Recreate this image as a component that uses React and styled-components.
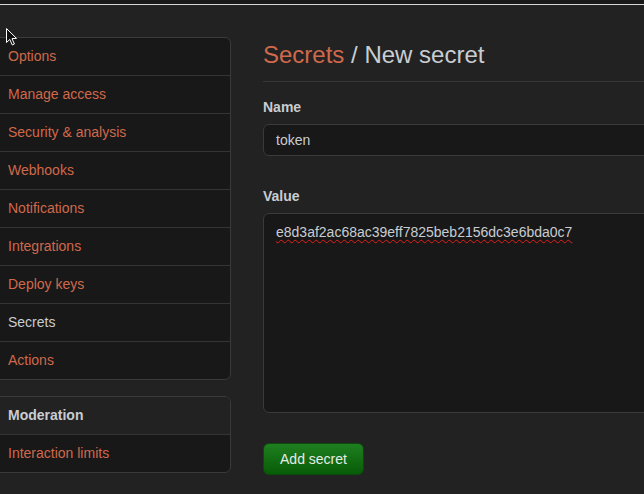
import React from 'react'
import styled, {createGlobalStyle} from 'styled-components'

const orange = '#d0694b'
const light = '#c9cdd2'

const Global = createGlobalStyle`
  html, body {
    margin: 0;
    padding: 0;
    background: #222222;
    overflow: hidden;
  }
  body {
    font-family: "Liberation Sans", Arial, sans-serif;
    font-size: 14px;
    color: ${light};
  }
`

const TopBar = styled.div`
  height: 4px;
  background: #181818;
  border-bottom: 1px solid #d6d6d6;
`
const Page = styled.div`
  display: flex;
  gap: 32px;
  margin-left: -9px;
  padding-top: 32px;
  width: 1000px;
`
const Sidebar = styled.nav`
  width: 240px;
  flex: none;
  display: flex;
  flex-direction: column;
  gap: 16px;
`
const Menu = styled.div`
  background: #181818;
  border: 1px solid #3a3a3a;
  border-radius: 6px;
  overflow: hidden;
`
const MenuItem = styled.a`
  display: block;
  padding: 8px 16px;
  line-height: 21px;
  color: ${p => (p.$current ? light : orange)};
  text-decoration: none;
  & + & {
    border-top: 1px solid #343434;
  }
`
const MenuHeading = styled.h3`
  margin: 0;
  padding: 8px 16px;
  line-height: 21px;
  font-size: 14px;
  font-weight: 700;
  color: ${light};
  background: #222222;
  border-bottom: 1px solid #343434;
`
const Main = styled.main`
  flex: 1;
`
const Subhead = styled.div`
  padding-bottom: 8px;
  border-bottom: 1px solid #363636;
  margin-bottom: 15px;
`
const Heading = styled.h2`
  margin: 0;
  font-size: 24px;
  font-weight: 400;
  line-height: 36px;
  color: ${light};
`
const Crumb = styled.a`
  color: ${orange};
  text-decoration: none;
`
const Group = styled.div`
  margin-bottom: ${p => p.$gap || 0}px;
`
const Label = styled.label`
  display: block;
  font-weight: 700;
  line-height: 20px;
  margin-bottom: 7px;
  color: ${light};
`
const Field = styled.div`
  box-sizing: border-box;
  height: ${p => p.$h}px;
  padding: ${p => (p.$multi ? '8px 12px' : '0 12px')};
  line-height: ${p => (p.$multi ? '20px' : '30px')};
  background: #181818;
  border: 1px solid #3a3a3a;
  border-radius: 6px;
  color: ${light};
  font-size: 14px;
`
const Misspelled = styled.span`
  text-decoration: underline wavy #e0201c;
  text-decoration-thickness: 1px;
  text-underline-offset: 2px;
`
const Button = styled.button`
  height: 32px;
  width: 101px;
  padding: 0 16px;
  font-family: inherit;
  font-size: 14px;
  color: #e6ecea;
  border: 1px solid #0c4a0c;
  border-radius: 6px;
  background: linear-gradient(#1f7f1f, #075c07);
`
const Cursor = styled.svg`
  position: absolute;
  left: 5px;
  top: 27px;
`

const items = [
  'Options',
  'Manage access',
  'Security & analysis',
  'Webhooks',
  'Notifications',
  'Integrations',
  'Deploy keys',
  'Secrets',
  'Actions'
]

const App = () => (
  <>
    <Global />
    <TopBar />
    <Page>
      <Sidebar>
        <Menu>
          {items.map(name => (
            <MenuItem key={name} $current={name === 'Secrets'}>{name}</MenuItem>
          ))}
        </Menu>
        <Menu>
          <MenuHeading>Moderation</MenuHeading>
          <MenuItem>Interaction limits</MenuItem>
        </Menu>
      </Sidebar>
      <Main>
        <Subhead>
          <Heading><Crumb>Secrets</Crumb> / New secret</Heading>
        </Subhead>
        <Group $gap={30}>
          <Label>Name</Label>
          <Field $h={32}>token</Field>
        </Group>
        <Group $gap={30}>
          <Label>Value</Label>
          <Field $h={200} $multi>
            <Misspelled>e8d3af2ac68ac39eff7825beb2156dc3e6bda0c7</Misspelled>
          </Field>
        </Group>
        <Button>Add secret</Button>
      </Main>
    </Page>
    <Cursor width="13" height="20" viewBox="0 0 13 20">
      <path d="M1.5 1.5 L1.5 15.5 L4.8 12.4 L7.3 18 L9.4 17 L7 11.6 L11.5 11.4 Z" fill="#111" stroke="#fff" strokeWidth="1" strokeLinejoin="miter" />
    </Cursor>
  </>
)

export default App
